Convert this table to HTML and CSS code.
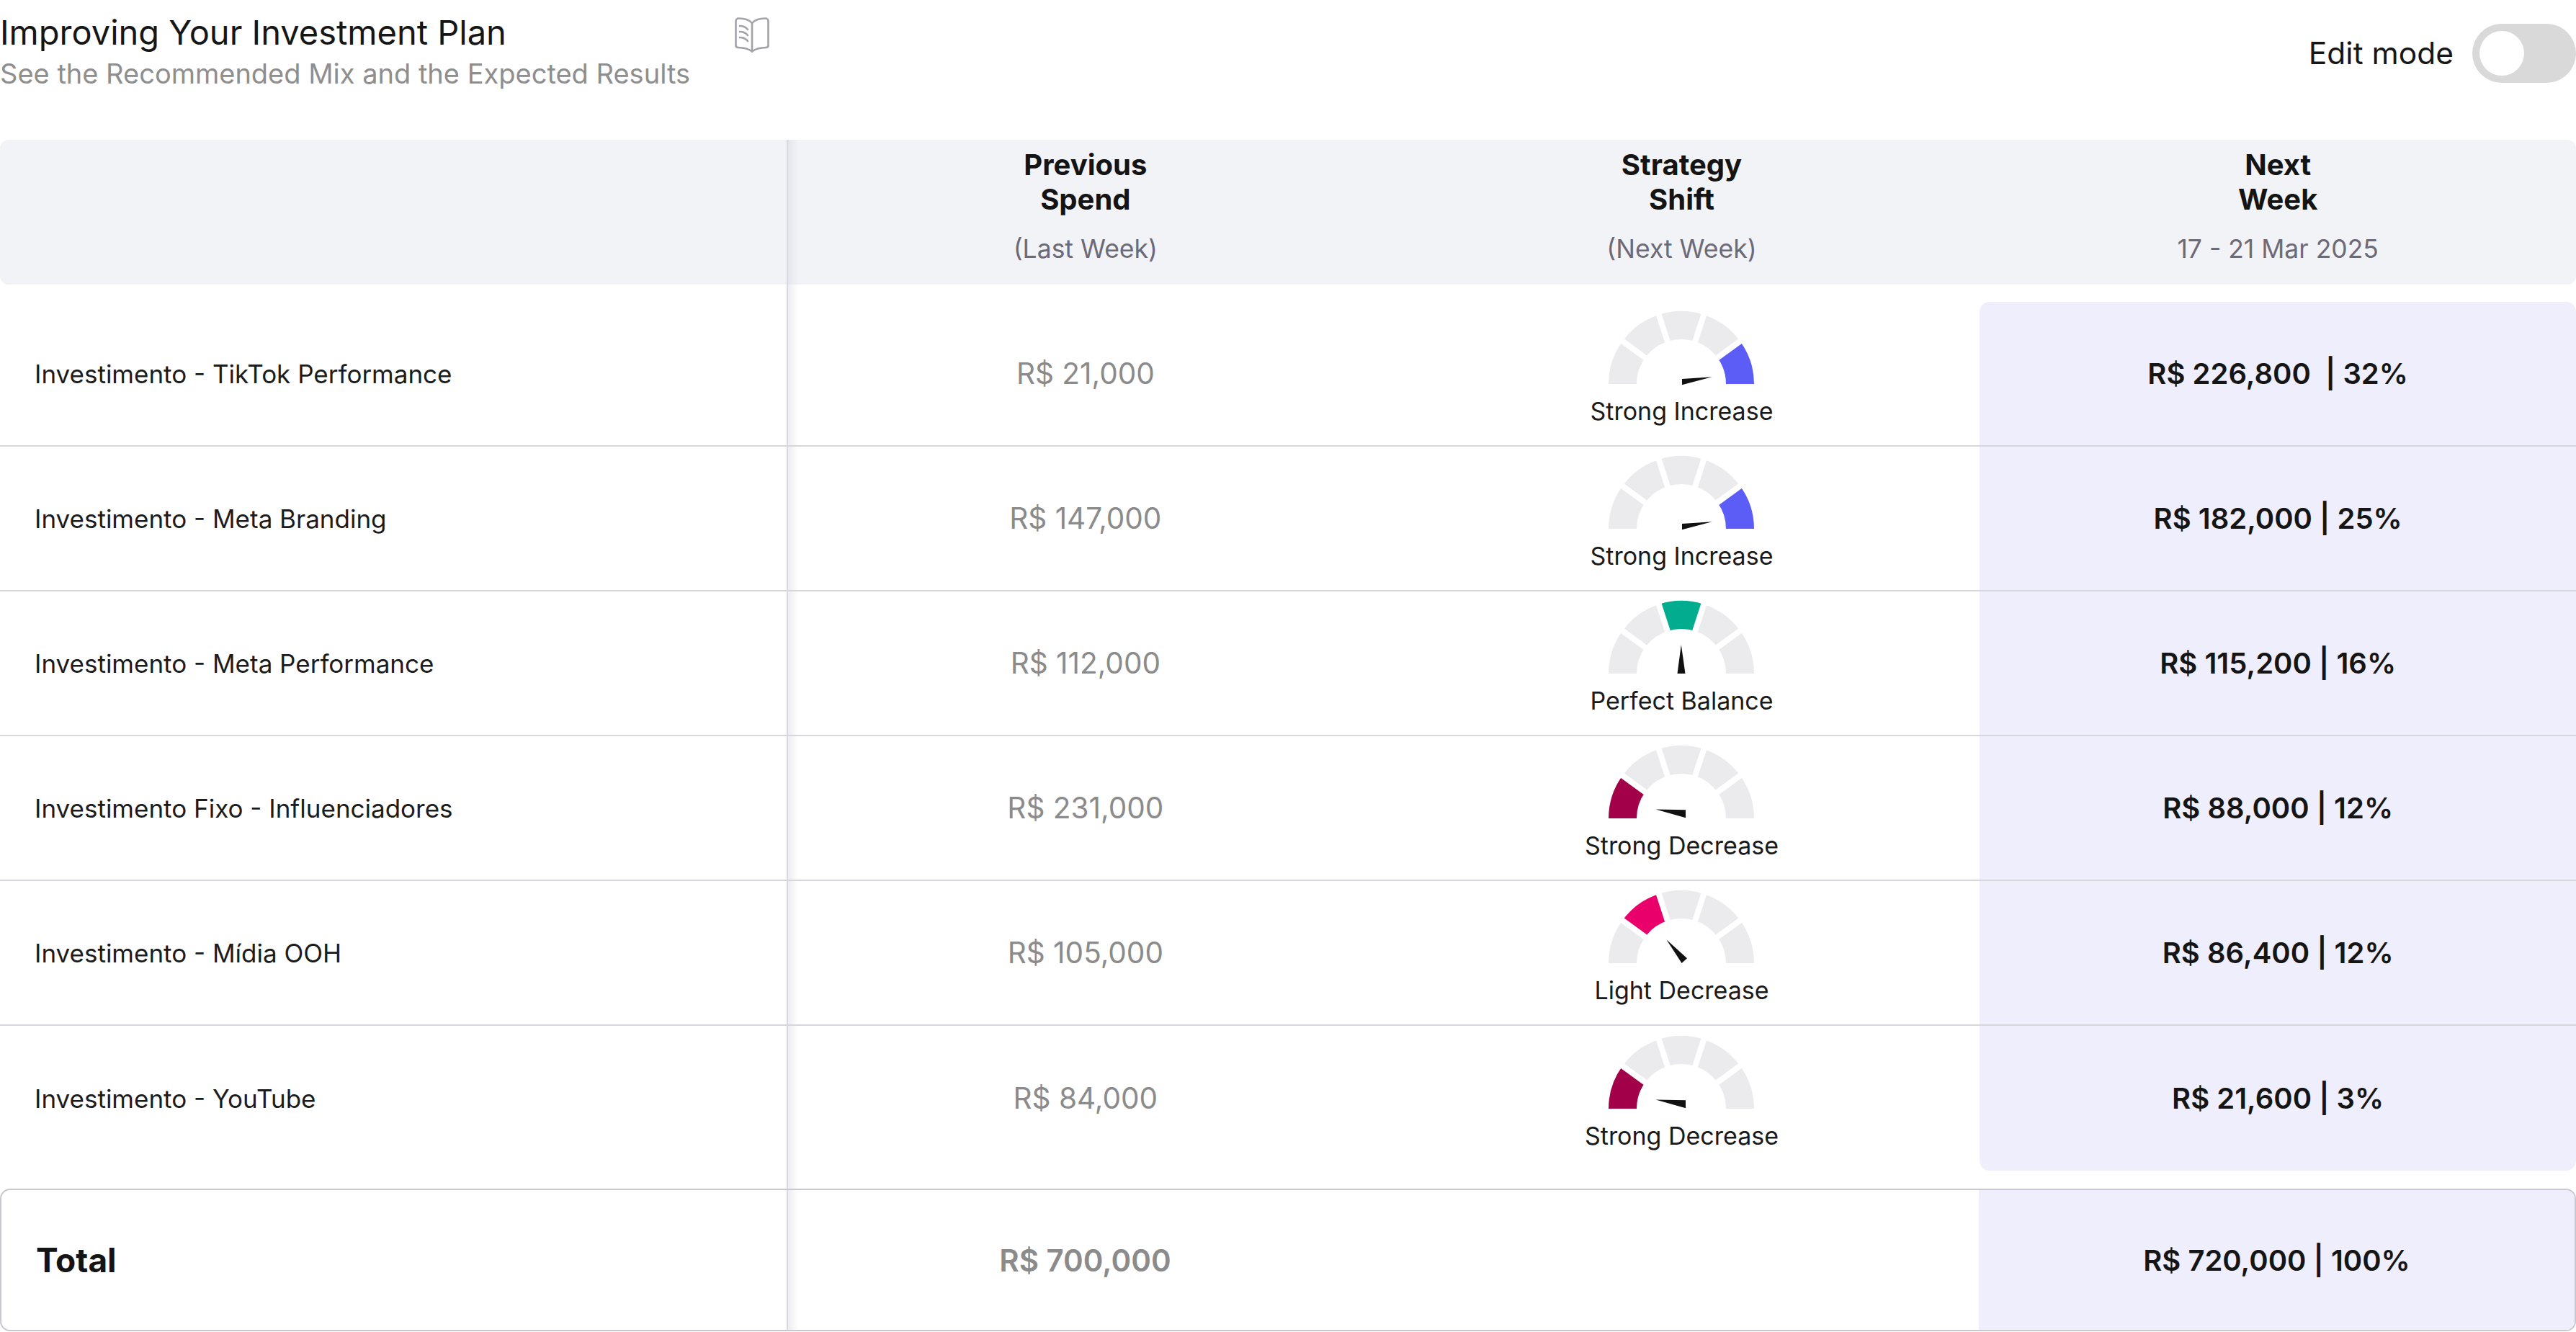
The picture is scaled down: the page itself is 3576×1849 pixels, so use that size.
FILE: index.html
```html
<!DOCTYPE html>
<html lang="en">
<head>
<meta charset="utf-8">
<title>Improving Your Investment Plan</title>
<link rel="stylesheet" href="styles.css">
</head>
<body>
<div class="page">
  <header class="topbar">
    <div class="intro">
      <div class="title-row">
        <h1 class="title">Improving Your Investment Plan</h1>
        <svg class="book" viewBox="0 0 50 50" aria-hidden="true">
          <path d="M25 9 C21 4.5 14 2.5 6.5 2.5 C4 2.5 2.5 4 2.5 6.5 L2.5 40 C2.5 42 4 43 6 43 C13.5 43.2 20 44.5 25 48.5 C30 44.5 36.5 43.2 44 43 C46 43 47.5 42 47.5 40 L47.5 6.5 C47.5 4 46 2.5 43.5 2.5 C36 2.5 29 4.5 25 9 Z"/>
          <path d="M25 9 V48.5"/>
          <path d="M8 13 Q15 13 19 18"/>
          <path d="M8 21 Q15 21 19 26"/>
          <path d="M8 29 Q15 29 19 34"/>
        </svg>
      </div>
      <p class="subtitle">See the Recommended Mix and the Expected Results</p>
    </div>
    <div class="edit">
      <span class="edit-label">Edit mode</span>
      <span class="toggle"><span class="knob"></span></span>
    </div>
  </header>

  <section class="table">
    <div class="thead row-grid divided">
      <div class="th"></div>
      <div class="th">
        <div class="th-title">Previous<br>Spend</div>
        <div class="th-sub">(Last Week)</div>
      </div>
      <div class="th">
        <div class="th-title">Strategy<br>Shift</div>
        <div class="th-sub">(Next Week)</div>
      </div>
      <div class="th">
        <div class="th-title">Next<br>Week</div>
        <div class="th-sub">17 - 21 Mar 2025</div>
      </div>
    </div>

    <div class="tbody divided">
      <div class="row row-grid">
        <div class="cell label">Investimento - TikTok Performance</div>
        <div class="cell prev">R$ 21,000</div>
        <div class="cell shift">
          <svg class="gauge" viewBox="0 0 204 108">
            <path class="g-off" d="M1 103 A101 101 0 0 1 20.29 43.63 L51.84 66.56 A62 62 0 0 0 40 103 Z"/>
            <path class="g-off" d="M20.29 43.63 A101 101 0 0 1 70.79 6.94 L82.84 44.03 A62 62 0 0 0 51.84 66.56 Z"/>
            <path class="g-off" d="M70.79 6.94 A101 101 0 0 1 133.21 6.94 L121.16 44.03 A62 62 0 0 0 82.84 44.03 Z"/>
            <path class="g-off" d="M133.21 6.94 A101 101 0 0 1 183.71 43.63 L152.16 66.56 A62 62 0 0 0 121.16 44.03 Z"/>
            <path class="g-blue" d="M183.71 43.63 A101 101 0 0 1 203 103 L164 103 A62 62 0 0 0 152.16 66.56 Z"/>
            <g class="g-gap"><line x1="102" y1="103" x2="13.01" y2="38.34"/><line x1="102" y1="103" x2="68.01" y2="-1.62"/><line x1="102" y1="103" x2="135.99" y2="-1.62"/><line x1="102" y1="103" x2="190.99" y2="38.34"/></g>
            <polygon class="g-needle" points="103,96 144.7,93.3 103,104.3"/>
          </svg>
          <span class="shift-label">Strong Increase</span>
        </div>
        <div class="cell next">R$ 226,800&nbsp; | 32%</div>
      </div>

      <div class="row row-grid">
        <div class="cell label">Investimento - Meta Branding</div>
        <div class="cell prev">R$ 147,000</div>
        <div class="cell shift">
          <svg class="gauge" viewBox="0 0 204 108">
            <path class="g-off" d="M1 103 A101 101 0 0 1 20.29 43.63 L51.84 66.56 A62 62 0 0 0 40 103 Z"/>
            <path class="g-off" d="M20.29 43.63 A101 101 0 0 1 70.79 6.94 L82.84 44.03 A62 62 0 0 0 51.84 66.56 Z"/>
            <path class="g-off" d="M70.79 6.94 A101 101 0 0 1 133.21 6.94 L121.16 44.03 A62 62 0 0 0 82.84 44.03 Z"/>
            <path class="g-off" d="M133.21 6.94 A101 101 0 0 1 183.71 43.63 L152.16 66.56 A62 62 0 0 0 121.16 44.03 Z"/>
            <path class="g-blue" d="M183.71 43.63 A101 101 0 0 1 203 103 L164 103 A62 62 0 0 0 152.16 66.56 Z"/>
            <g class="g-gap"><line x1="102" y1="103" x2="13.01" y2="38.34"/><line x1="102" y1="103" x2="68.01" y2="-1.62"/><line x1="102" y1="103" x2="135.99" y2="-1.62"/><line x1="102" y1="103" x2="190.99" y2="38.34"/></g>
            <polygon class="g-needle" points="103,96 144.7,93.3 103,104.3"/>
          </svg>
          <span class="shift-label">Strong Increase</span>
        </div>
        <div class="cell next">R$ 182,000 | 25%</div>
      </div>

      <div class="row row-grid">
        <div class="cell label">Investimento - Meta Performance</div>
        <div class="cell prev">R$ 112,000</div>
        <div class="cell shift">
          <svg class="gauge" viewBox="0 0 204 108">
            <path class="g-off" d="M1 103 A101 101 0 0 1 20.29 43.63 L51.84 66.56 A62 62 0 0 0 40 103 Z"/>
            <path class="g-off" d="M20.29 43.63 A101 101 0 0 1 70.79 6.94 L82.84 44.03 A62 62 0 0 0 51.84 66.56 Z"/>
            <path class="g-green" d="M70.79 6.94 A101 101 0 0 1 133.21 6.94 L121.16 44.03 A62 62 0 0 0 82.84 44.03 Z"/>
            <path class="g-off" d="M133.21 6.94 A101 101 0 0 1 183.71 43.63 L152.16 66.56 A62 62 0 0 0 121.16 44.03 Z"/>
            <path class="g-off" d="M183.71 43.63 A101 101 0 0 1 203 103 L164 103 A62 62 0 0 0 152.16 66.56 Z"/>
            <g class="g-gap"><line x1="102" y1="103" x2="13.01" y2="38.34"/><line x1="102" y1="103" x2="68.01" y2="-1.62"/><line x1="102" y1="103" x2="135.99" y2="-1.62"/><line x1="102" y1="103" x2="190.99" y2="38.34"/></g>
            <polygon class="g-needle" points="96.5,103 101.8,63 107.5,103"/>
          </svg>
          <span class="shift-label">Perfect Balance</span>
        </div>
        <div class="cell next">R$ 115,200 | 16%</div>
      </div>

      <div class="row row-grid">
        <div class="cell label">Investimento Fixo - Influenciadores</div>
        <div class="cell prev">R$ 231,000</div>
        <div class="cell shift">
          <svg class="gauge" viewBox="0 0 204 108">
            <path class="g-crimson" d="M1 103 A101 101 0 0 1 20.29 43.63 L51.84 66.56 A62 62 0 0 0 40 103 Z"/>
            <path class="g-off" d="M20.29 43.63 A101 101 0 0 1 70.79 6.94 L82.84 44.03 A62 62 0 0 0 51.84 66.56 Z"/>
            <path class="g-off" d="M70.79 6.94 A101 101 0 0 1 133.21 6.94 L121.16 44.03 A62 62 0 0 0 82.84 44.03 Z"/>
            <path class="g-off" d="M133.21 6.94 A101 101 0 0 1 183.71 43.63 L152.16 66.56 A62 62 0 0 0 121.16 44.03 Z"/>
            <path class="g-off" d="M183.71 43.63 A101 101 0 0 1 203 103 L164 103 A62 62 0 0 0 152.16 66.56 Z"/>
            <g class="g-gap"><line x1="102" y1="103" x2="13.01" y2="38.34"/><line x1="102" y1="103" x2="68.01" y2="-1.62"/><line x1="102" y1="103" x2="135.99" y2="-1.62"/><line x1="102" y1="103" x2="190.99" y2="38.34"/></g>
            <polygon class="g-needle" points="108,91.2 66.5,90.6 108,102.3"/>
          </svg>
          <span class="shift-label">Strong Decrease</span>
        </div>
        <div class="cell next">R$ 88,000 | 12%</div>
      </div>

      <div class="row row-grid">
        <div class="cell label">Investimento - Mídia OOH</div>
        <div class="cell prev">R$ 105,000</div>
        <div class="cell shift">
          <svg class="gauge" viewBox="0 0 204 108">
            <path class="g-off" d="M1 103 A101 101 0 0 1 20.29 43.63 L51.84 66.56 A62 62 0 0 0 40 103 Z"/>
            <path class="g-pink" d="M20.29 43.63 A101 101 0 0 1 70.79 6.94 L82.84 44.03 A62 62 0 0 0 51.84 66.56 Z"/>
            <path class="g-off" d="M70.79 6.94 A101 101 0 0 1 133.21 6.94 L121.16 44.03 A62 62 0 0 0 82.84 44.03 Z"/>
            <path class="g-off" d="M133.21 6.94 A101 101 0 0 1 183.71 43.63 L152.16 66.56 A62 62 0 0 0 121.16 44.03 Z"/>
            <path class="g-off" d="M183.71 43.63 A101 101 0 0 1 203 103 L164 103 A62 62 0 0 0 152.16 66.56 Z"/>
            <g class="g-gap"><line x1="102" y1="103" x2="13.01" y2="38.34"/><line x1="102" y1="103" x2="68.01" y2="-1.62"/><line x1="102" y1="103" x2="135.99" y2="-1.62"/><line x1="102" y1="103" x2="190.99" y2="38.34"/></g>
            <polygon class="g-needle" points="110,96.2 81.3,70.3 102.6,103"/>
          </svg>
          <span class="shift-label">Light Decrease</span>
        </div>
        <div class="cell next">R$ 86,400 | 12%</div>
      </div>

      <div class="row row-grid">
        <div class="cell label">Investimento - YouTube</div>
        <div class="cell prev">R$ 84,000</div>
        <div class="cell shift">
          <svg class="gauge" viewBox="0 0 204 108">
            <path class="g-crimson" d="M1 103 A101 101 0 0 1 20.29 43.63 L51.84 66.56 A62 62 0 0 0 40 103 Z"/>
            <path class="g-off" d="M20.29 43.63 A101 101 0 0 1 70.79 6.94 L82.84 44.03 A62 62 0 0 0 51.84 66.56 Z"/>
            <path class="g-off" d="M70.79 6.94 A101 101 0 0 1 133.21 6.94 L121.16 44.03 A62 62 0 0 0 82.84 44.03 Z"/>
            <path class="g-off" d="M133.21 6.94 A101 101 0 0 1 183.71 43.63 L152.16 66.56 A62 62 0 0 0 121.16 44.03 Z"/>
            <path class="g-off" d="M183.71 43.63 A101 101 0 0 1 203 103 L164 103 A62 62 0 0 0 152.16 66.56 Z"/>
            <g class="g-gap"><line x1="102" y1="103" x2="13.01" y2="38.34"/><line x1="102" y1="103" x2="68.01" y2="-1.62"/><line x1="102" y1="103" x2="135.99" y2="-1.62"/><line x1="102" y1="103" x2="190.99" y2="38.34"/></g>
            <polygon class="g-needle" points="108,91.2 66.5,90.6 108,102.3"/>
          </svg>
          <span class="shift-label">Strong Decrease</span>
        </div>
        <div class="cell next">R$ 21,600 | 3%</div>
      </div>
    </div>

    <div class="total row-grid-total divided-total">
      <div class="cell total-label">Total</div>
      <div class="cell total-prev">R$ 700,000</div>
      <div class="cell"></div>
      <div class="cell total-next">R$ 720,000 | 100%</div>
    </div>
  </section>
</div>
</body>
</html>
```

FILE: styles.css
```css
* {
  box-sizing: border-box;
}

html,
body {
  margin: 0;
  padding: 0;
  background: #ffffff;
  overflow: hidden;
}

body {
  font-family: Inter, "Noto Sans", "Liberation Sans", sans-serif;
  color: #181818;
}

.page {
  width: 3576px;
}

/* ---------- top bar ---------- */
.topbar {
  display: flex;
  justify-content: space-between;
  align-items: flex-start;
  height: 194px;
  padding-top: 16px;
}

.intro {
  width: 1069px;
}

.title-row {
  display: flex;
  justify-content: space-between;
  align-items: flex-start;
}

.title {
  margin: 0;
  font-size: 47px;
  font-weight: 400;
  line-height: 58px;
  color: #161616;
}

.book {
  width: 50px;
  height: 50px;
  margin-top: 7px;
  fill: none;
  stroke: #a2a2aa;
  stroke-width: 2.6;
  stroke-linecap: round;
  stroke-linejoin: round;
}

.subtitle {
  margin: 5px 0 0;
  font-size: 38px;
  line-height: 46px;
  color: #8e8e8e;
}

.edit {
  display: flex;
  align-items: center;
  gap: 26px;
  margin-top: 17px;
}

.edit-label {
  font-size: 42.5px;
  line-height: 50px;
  color: #161616;
}

.toggle {
  display: flex;
  width: 144px;
  height: 82px;
  padding: 10px;
  border-radius: 41px;
  background: #d9d9d9;
}

.knob {
  width: 62px;
  height: 62px;
  border-radius: 50%;
  background: #ffffff;
}

/* ---------- table ---------- */
.row-grid {
  display: grid;
  grid-template-columns: 1093px 1fr 1fr 1fr;
}

.row-grid-total {
  display: grid;
  grid-template-columns: 1091px 1fr 1fr 1fr;
}

.divided {
  background-image: linear-gradient(90deg,
      rgba(0, 0, 0, 0) 1092px,
      #d8d8de 1092px,
      #d8d8de 1094px,
      rgba(205, 205, 215, 0.35) 1094px,
      rgba(205, 205, 215, 0) 1108px);
}

.divided-total {
  background-image: linear-gradient(90deg,
      rgba(0, 0, 0, 0) 1090px,
      #d8d8de 1090px,
      #d8d8de 1092px,
      rgba(205, 205, 215, 0.35) 1092px,
      rgba(205, 205, 215, 0) 1106px);
}

.thead {
  height: 201px;
  background-color: #f2f3f7;
  border-radius: 12px;
}

.th {
  text-align: center;
  padding-top: 11px;
}

.th-title {
  font-size: 40px;
  font-weight: 700;
  line-height: 48px;
  color: #141414;
}

.th-sub {
  margin-top: 25px;
  font-size: 35.5px;
  line-height: 40px;
  color: #6d6a78;
}

.tbody {
  padding: 24px 0 25px;
}

.row {
  height: 201px;
  border-bottom: 2px solid #d6d6dc;
}

.row:last-child {
  border-bottom: none;
}

.cell {
  display: flex;
  align-items: center;
  justify-content: center;
}

.label {
  justify-content: flex-start;
  padding-left: 48px;
  font-size: 35px;
  color: #1c1c1c;
}

.prev {
  font-size: 40.5px;
  color: #8b8b8b;
}

.shift {
  flex-direction: column;
  padding-bottom: 16px;
}

.gauge {
  display: block;
  width: 204px;
  height: 108px;
  overflow: visible;
}

.g-off {
  fill: #ebebee;
}

.g-blue {
  fill: #5c5cf6;
}

.g-green {
  fill: #02ad8f;
}

.g-crimson {
  fill: #a20049;
}

.g-pink {
  fill: #e9006b;
}

.g-gap line {
  stroke: #ffffff;
  stroke-width: 8;
}

.g-needle {
  fill: #111111;
}

.shift-label {
  margin-top: 13px;
  font-size: 34px;
  line-height: 40px;
  color: #1a1a1a;
}

.next {
  background: #efeefc;
  font-size: 40px;
  font-weight: 600;
  color: #151515;
  white-space: pre;
}

.row:first-child .next {
  border-radius: 14px 14px 0 0;
}

.row:last-child .next {
  border-radius: 0 0 14px 14px;
}

/* ---------- total ---------- */
.total {
  height: 198px;
  border: 2px solid #c9c8d0;
  border-radius: 14px;
  overflow: hidden;
}

.total-label {
  justify-content: flex-start;
  padding-left: 48px;
  font-size: 46px;
  font-weight: 700;
  color: #141414;
}

.total-prev {
  font-size: 42px;
  font-weight: 600;
  color: #8b8b8b;
}

.total-next {
  background: #efeefc;
  font-size: 40px;
  font-weight: 600;
  color: #151515;
}
```
